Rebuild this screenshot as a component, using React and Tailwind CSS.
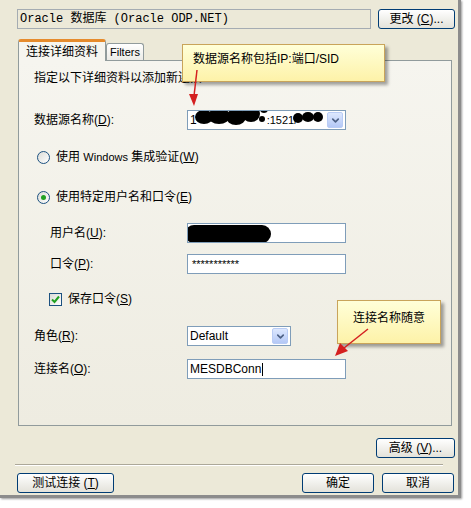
import { ChevronDown } from 'lucide-react';

const FONT = { fontFamily: '"Liberation Sans", "Noto Sans CJK SC", sans-serif' };

function XpButton({ children, className = '' }) {
  return (
    <button
      type="button"
      className={`flex h-[20px] items-center justify-center rounded-[3px] border border-[#003C74] bg-gradient-to-b from-white to-[#E3E2DA] text-[12px] text-black ${className}`}
    >
      {children}
    </button>
  );
}

function Key({ k }) {
  return <span className="underline">{k}</span>;
}

function TextBox({ children, className = '' }) {
  return (
    <div
      className={`relative flex h-[20px] items-center overflow-hidden border border-[#7F9DB9] bg-white px-[2px] text-[12px] ${className}`}
    >
      {children}
    </div>
  );
}

function Combo({ children, className = '' }) {
  return (
    <TextBox className={className}>
      <div className="flex-1">{children}</div>
      <div className="flex h-[16px] w-[16px] items-center justify-center rounded-[2px] border border-[#B9CCF5] bg-gradient-to-b from-[#DDE8FE] to-[#B4C8F6]">
        <ChevronDown className="h-[11px] w-[11px] text-[#4D6185]" strokeWidth={3.5} />
      </div>
    </TextBox>
  );
}

function Radio({ checked }) {
  return (
    <span className="flex h-[13px] w-[13px] items-center justify-center rounded-full border border-[#1C5180] bg-gradient-to-br from-[#DCDCD7] to-white">
      {checked && <span className="h-[5px] w-[5px] rounded-full bg-[#21A121]" />}
    </span>
  );
}

function Callout({ className, children }) {
  return (
    <div
      className={`absolute border border-[#C9A45A] bg-gradient-to-b from-[#FFFFD8] to-[#FDF2A8] px-[10px] pt-[5px] text-[12px] text-black shadow-[3px_3px_3px_rgba(0,0,0,0.35)] ${className}`}
    >
      {children}
    </div>
  );
}

export default function App() {
  return (
    <div className="min-h-[508px] w-[471px] bg-white" style={FONT}>
      <div className="relative h-[498px] w-[461px] border-r-[3px] border-b-[3px] border-[#8C8C8C] bg-[#ECE9D8] shadow-[1px_1px_2px_rgba(0,0,0,0.4)]">
        {/* top row */}
        <div className="flex items-center gap-[7px] pl-[17px] pt-[9px]">
          <div
            className="flex h-[20px] w-[354px] items-center border border-[#A5ACB2] px-[2px] text-[12px]"
            style={{ fontFamily: '"Liberation Mono", "Noto Sans CJK SC", monospace' }}
          >
            Oracle 数据库 (Oracle ODP.NET)
          </div>
          <XpButton className="w-[77px]">
            更改 (<Key k="C" />)...
          </XpButton>
        </div>

        {/* tabs */}
        <div className="mt-[10px] flex items-end pl-[18px]">
          <div className="relative z-10 -mb-px flex h-[22px] w-[88px] items-center justify-center rounded-t-[3px] border border-b-0 border-[#919B9C] border-t-[3px] border-t-[#E68B2C] bg-[#F6F5EF] text-[12px]">
            连接详细资料
          </div>
          <div className="flex h-[17px] w-[38px] items-center justify-center rounded-t-[3px] border border-b-0 border-[#919B9C] bg-gradient-to-b from-white to-[#ECEBE6] text-[11px]">
            Filters
          </div>
        </div>

        {/* tab panel */}
        <div className="ml-[18px] h-[366px] w-[434px] border border-[#919B9C] bg-gradient-to-b from-[#F6F5EF] to-[#EEECE1] pl-[15px] text-[12px] text-black">
          <div className="mt-[7px] flex h-[20px] items-center">指定以下详细资料以添加新连接</div>

          <div className="mt-[22px] flex h-[20px] items-center">
            <span className="w-[153px]">
              数据源名称(<Key k="D" />):
            </span>
            <Combo className="w-[159px]">
              <div className="relative">
                <span>1</span>
                <span className="ml-[70px] text-[11px]">:1521/</span>
                <svg className="absolute -top-[7px] left-[2px]" width="132" height="24" viewBox="0 0 132 24">
                  <ellipse cx="12" cy="13" rx="9" ry="7" fill="#000" />
                  <ellipse cx="27" cy="12" rx="11" ry="8" fill="#000" />
                  <ellipse cx="44" cy="13" rx="10" ry="8" fill="#000" />
                  <ellipse cx="59" cy="10" rx="9" ry="8" fill="#000" />
                  <circle cx="72" cy="5" r="4" fill="#000" />
                  <circle cx="70" cy="15" r="3" fill="#000" />
                  <ellipse cx="106" cy="14" rx="5" ry="5" fill="#000" />
                  <ellipse cx="116" cy="13" rx="6" ry="5" fill="#000" />
                  <ellipse cx="126" cy="13" rx="5" ry="5" fill="#000" />
                </svg>
              </div>
            </Combo>
          </div>

          <div className="mt-[17px] flex h-[20px] items-center gap-[6px] pl-[3px]">
            <Radio />
            <span>
              使用 <span className="text-[11px]">Windows</span> 集成验证(<Key k="W" />)
            </span>
          </div>

          <div className="mt-[20px] flex h-[20px] items-center gap-[6px] pl-[3px]">
            <Radio checked />
            <span>
              使用特定用户名和口令(<Key k="E" />)
            </span>
          </div>

          <div className="mt-[16px] flex h-[20px] items-center pl-[16px]">
            <span className="w-[137px]">
              用户名(<Key k="U" />):
            </span>
            <TextBox className="w-[159px]">
              <span className="absolute left-[-3px] top-[1px] h-[18px] w-[86px] rounded-full bg-black" />
            </TextBox>
          </div>

          <div className="mt-[11px] flex h-[20px] items-center pl-[16px]">
            <span className="w-[137px]">
              口令(<Key k="P" />):
            </span>
            <TextBox className="w-[159px]">
              <span className="pl-[2px] text-[11px]">***********</span>
            </TextBox>
          </div>

          <div className="mt-[15px] flex h-[20px] items-center gap-[6px] pl-[15px]">
            <span className="flex h-[13px] w-[13px] items-center justify-center border border-[#1C5180] bg-gradient-to-br from-[#DCDCD7] to-white">
              <svg width="9" height="9" viewBox="0 0 9 9">
                <path d="M1 4.5 L3.5 7 L8 1.5" stroke="#21A121" strokeWidth="2" fill="none" />
              </svg>
            </span>
            <span>
              保存口令(<Key k="S" />)
            </span>
          </div>

          <div className="mt-[17px] flex h-[20px] items-center">
            <span className="w-[153px]">
              角色(<Key k="R" />):
            </span>
            <Combo className="w-[104px]">Default</Combo>
          </div>

          <div className="mt-[13px] flex h-[20px] items-center">
            <span className="w-[153px]">
              连接名(<Key k="O" />):
            </span>
            <TextBox className="w-[159px]">
              MESDBConn<span className="ml-px h-[13px] w-px bg-black" />
            </TextBox>
          </div>
        </div>

        {/* advanced */}
        <div className="mt-[12px] flex justify-end pr-[3px]">
          <XpButton className="w-[79px]">
            高级 (<Key k="V" />)...
          </XpButton>
        </div>

        <div className="mx-[15px] mt-[6px] border-t border-b border-t-[#ACA899] border-b-white" />

        {/* bottom buttons */}
        <div className="mt-[7px] flex items-center pl-[17px] pr-[4px]">
          <XpButton className="w-[97px]">
            测试连接 (<Key k="T" />)
          </XpButton>
          <div className="flex-1" />
          <XpButton className="w-[72px]">确定</XpButton>
          <XpButton className="ml-[8px] w-[72px]">取消</XpButton>
        </div>

        {/* callouts */}
        <Callout className="left-[182px] top-[44px] h-[38px] w-[203px]">数据源名称包括IP:端口/SID</Callout>
        <Callout className="left-[337px] top-[300px] h-[44px] w-[104px] pl-[15px] pt-[8px]">连接名称随意</Callout>

        <svg className="absolute left-0 top-0" width="461" height="498" viewBox="0 0 461 498" style={{ pointerEvents: 'none' }}>
          <line x1="197" y1="70" x2="194" y2="96" stroke="#D42020" strokeWidth="1.5" />
          <path d="M189 94 L194 106 L198 94 Z" fill="#D42020" />
          <line x1="368" y1="329" x2="344" y2="348" stroke="#D42020" strokeWidth="1.5" />
          <path d="M340 343 L335 356 L348 351 Z" fill="#D42020" />
        </svg>
      </div>
    </div>
  );
}
